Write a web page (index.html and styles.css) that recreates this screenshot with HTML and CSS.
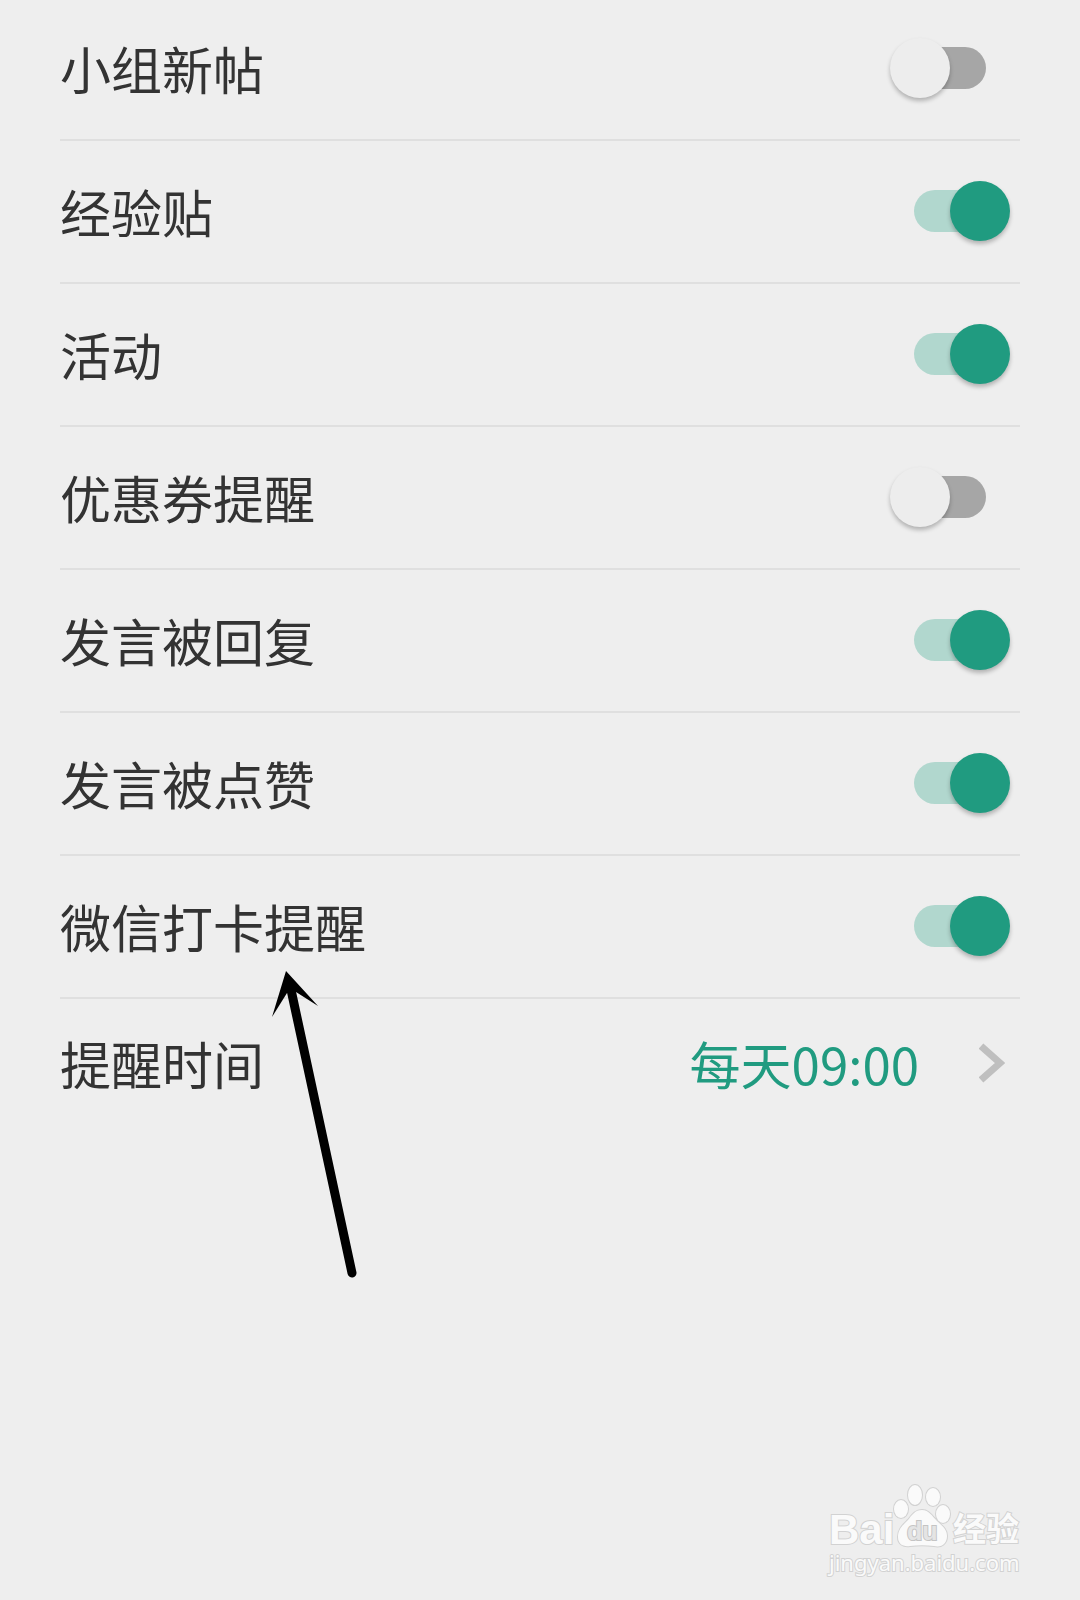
FILE: index.html
```html
<!DOCTYPE html>
<html lang="zh-CN">
<head>
    <meta charset="UTF-8">
    <meta name="viewport" content="width=device-width, initial-scale=1.0">
    <title>消息提醒</title>
    <link rel="stylesheet" href="styles.css">
</head>
<body>
    <main class="settings">
        <!-- 提醒开关 -->
        <label class="row">
            <span class="name">小组新帖</span>
            <input type="checkbox" class="switch">
        </label>
        <label class="row">
            <span class="name">经验贴</span>
            <input type="checkbox" class="switch" checked>
        </label>
        <label class="row">
            <span class="name">活动</span>
            <input type="checkbox" class="switch" checked>
        </label>
        <label class="row">
            <span class="name">优惠券提醒</span>
            <input type="checkbox" class="switch">
        </label>
        <label class="row">
            <span class="name">发言被回复</span>
            <input type="checkbox" class="switch" checked>
        </label>
        <label class="row">
            <span class="name">发言被点赞</span>
            <input type="checkbox" class="switch" checked>
        </label>
        <label class="row">
            <span class="name">微信打卡提醒</span>
            <input type="checkbox" class="switch" checked>
            <svg class="arrow" width="86" height="308" viewBox="0 0 86 308" aria-hidden="true">
                <path d="M14 0 L46 35 L24 21 L15 22 L0 46 Z"/>
                <path class="shaft" d="M18 14 L80 302"/>
            </svg>
        </label>

        <button type="button" class="row time-row">
            <span class="name">提醒时间</span>
            <span class="time">每天09:00</span>
            <svg class="chevron" width="26" height="40" viewBox="0 0 26 40" aria-hidden="true">
                <path d="M2 3 L21 20 L2 37"/>
            </svg>
        </button>
    </main>

    <footer>
        <svg class="watermark" width="200" height="104" viewBox="0 0 200 104">
            <text class="brand" x="5" y="63">Bai</text>
            <ellipse cx="77" cy="28" rx="7" ry="9"/>
            <ellipse cx="91" cy="14" rx="7" ry="10"/>
            <ellipse cx="109" cy="16" rx="7" ry="9"/>
            <ellipse cx="119" cy="33" rx="7" ry="9"/>
            <path d="M98 29 C91 29 88 34 84 39 C79 44 74 48 74 56 C74 63 79 66 86 65 C94 64 102 64 110 65 C118 67 123 62 123 55 C123 48 118 45 113 40 C108 35 105 29 98 29 Z"/>
            <text class="du" x="83" y="59">du</text>
            <text class="cn" x="129" y="60">经验</text>
            <text class="url" x="5" y="90">jingyan.baidu.com</text>
        </svg>
    </footer>
</body>
</html>
```
FILE: styles.css
```css
:root {
    --bg: #eeeeee;
    --text: #333333;
    --line: #dfdfdf;
    --green: #209b80;
    --green-light: #b1d7ce;
    --gray: #a6a6a6;
}

* {
    box-sizing: border-box;
}

body {
    margin: 0;
    min-height: 100vh;
    display: flex;
    flex-direction: column;
    background-color: var(--bg);
    color: var(--text);
    font-family: "Noto Sans CJK SC", sans-serif;
    font-size: 51px;
    line-height: 72px;
}

.settings {
    margin-top: -2px;
    padding: 0 60px;
}

.row {
    position: relative;
    display: flex;
    align-items: center;
    width: 100%;
    min-height: 143px;
    padding: 0 10px 2px 0;
    border: 0;
    border-bottom: 2px solid var(--line);
    cursor: pointer;
}

.name {
    flex: 1;
    text-align: left;
}

/* 开关 */
.switch {
    appearance: none;
    display: grid;
    align-items: center;
    width: 120px;
    height: 60px;
    margin: 0;
    cursor: pointer;
}

.switch::before,
.switch::after {
    content: "";
    grid-area: 1 / 1;
}

.switch::before {
    justify-self: center;
    width: 72px;
    height: 42px;
    border-radius: 21px;
    background-color: var(--gray);
}

.switch::after {
    width: 60px;
    height: 60px;
    border-radius: 50%;
    background-color: #ededed;
    box-shadow: 0 3px 4px rgba(0, 0, 0, 0.25);
}

.switch:checked::before {
    background-color: var(--green-light);
}

.switch:checked::after {
    justify-self: end;
    background-color: var(--green);
}

/* 提醒时间 */
.time-row {
    min-height: 130px;
    padding-right: 15px;
    border-bottom: 0;
    background: none;
    color: inherit;
    font: inherit;
}

.time {
    margin-right: 60px;
    color: var(--green);
}

.chevron path {
    fill: none;
    stroke: #bfbfbf;
    stroke-width: 7;
}

/* 箭头标注 */
.arrow {
    position: absolute;
    left: 212px;
    top: 115px;
    z-index: 1;
    pointer-events: none;
}

.arrow .shaft {
    stroke: #000;
    stroke-width: 9;
    stroke-linecap: round;
}

/* 水印 */
footer {
    display: flex;
    justify-content: flex-end;
    margin-top: auto;
    padding: 0 56px 15px;
}

.watermark {
    fill: #fafafa;
    stroke: #d2d2d2;
    stroke-width: 2;
    paint-order: stroke;
}

.brand {
    font: bold 42px "Liberation Sans", sans-serif;
}

.du {
    font: bold 25px "Liberation Sans", sans-serif;
    fill: #e4e4e4;
    stroke: #c4c4c4;
}

.cn {
    font: bold 33px "Noto Sans CJK SC", sans-serif;
}

.url {
    font: 22px "Noto Sans", sans-serif;
}
```
